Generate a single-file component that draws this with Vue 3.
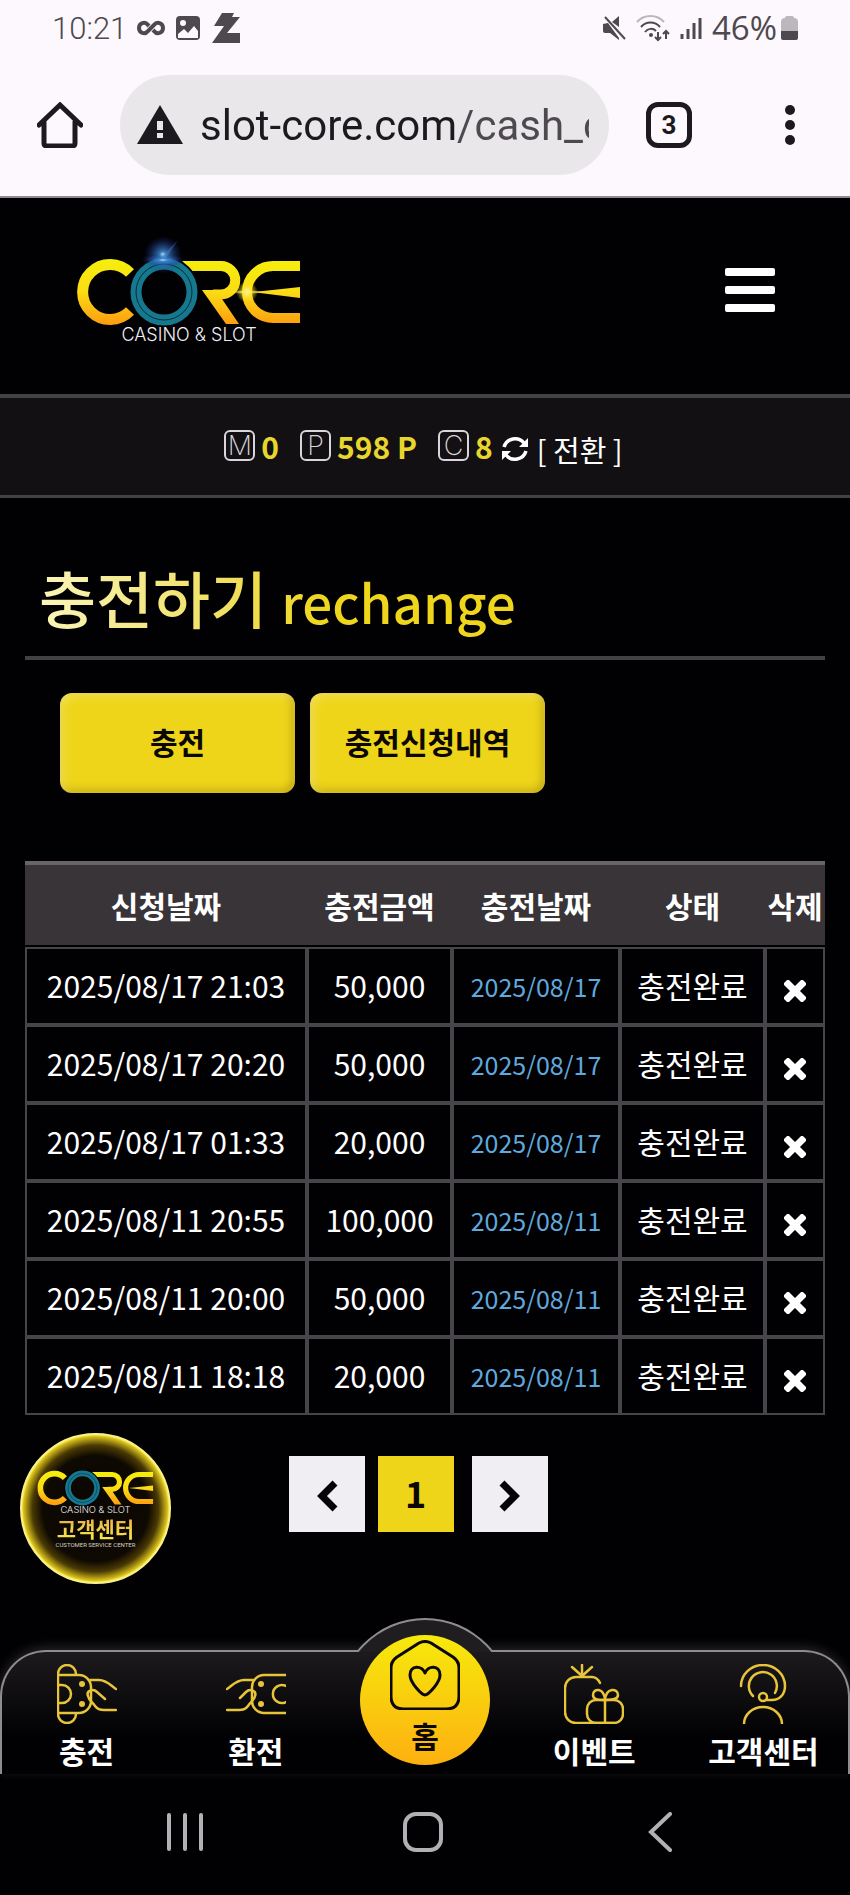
<template>
  <div class="screen">
    <header class="browser">
      <div class="status-bar">
        <div class="status-group">
          <span class="clock">10:21</span>
          <svg class="infinity" width="28" height="18" viewBox="0 0 28 18" aria-hidden="true">
            <path d="M16 11l1 1c3 4 9 2 9-3s-6-7-9-3l-6 6c-3 4-9 2-9-3s6-7 9-3l1 1" />
          </svg>
          <svg width="26" height="26" viewBox="0 0 26 26" aria-hidden="true">
            <rect x="1" y="1" width="24" height="24" rx="4" fill="#4d494f" />
            <circle cx="8" cy="8" r="3" fill="#fcf8fd" />
            <path d="M3 19l6-5 4 4 6-7 4 5v7H3z" fill="#fcf8fd" />
          </svg>
          <svg width="30" height="32" viewBox="0 0 30 32" aria-hidden="true">
            <path d="M11 1h12l-2 4h8L16 21h13v10H1l12-17H3z" fill="#4d494f" />
          </svg>
        </div>
        <div class="status-group right">
          <svg width="24" height="26" viewBox="0 0 24 26" aria-hidden="true">
            <path d="M1 9l5-1 11 15v2l-9-7H3q-2 0-2-2zM10 7l7-6v11z" fill="#4d494f" />
            <path d="M3 2l20 22" stroke="#4d494f" stroke-width="2" />
          </svg>
          <svg class="wifi" width="34" height="28" viewBox="0 0 34 28" aria-hidden="true">
            <path d="M1 8C8 0 21 0 28 8" stroke="#bbb7bd" />
            <path d="M5 13c5-6 14-6 19 0M9 18c3-4 8-4 11-1" />
            <circle cx="15" cy="21" r="2" fill="#4d494f" stroke="none" />
            <path d="M22 18v8m-3-3l3 3 3-3M30 25v-8m-3 3l3-3 3 3" />
          </svg>
          <svg width="22" height="24" viewBox="0 0 22 24" aria-hidden="true">
            <path d="M2 18v5M8 13v10M14 7v16M20 2v21" stroke="#4d494f" stroke-width="3" />
          </svg>
          <span class="battery">
            46%
            <svg width="17" height="24" viewBox="0 0 17 24" aria-hidden="true">
              <path d="M4 2q0-2 2-2h5q2 0 2 2 4 0 4 4v9H0V6q0-4 4-4z" fill="#bbb7bd" />
              <path d="M0 15h17v7q0 2-2 2H2q-2 0-2-2z" fill="#4d494f" />
            </svg>
          </span>
        </div>
      </div>

      <div class="toolbar">
        <button class="icon-button" type="button" aria-label="Home">
          <svg width="46" height="46" viewBox="0 0 46 46" aria-hidden="true">
            <path class="home-line" d="M2 23L23 3l21 20M7 20v21q0 3 3 3h25q3 0 3-3V20" />
          </svg>
        </button>
        <div class="address">
          <svg width="46" height="40" viewBox="0 0 46 40" aria-hidden="true">
            <path d="M23 0l23 39H0z" fill="#1d1a1f" />
            <path d="M20 16h6v9h-6zM20 28h6v5h-6z" fill="#eae7eb" />
          </svg>
          <input v-model="url" class="url" type="text" aria-label="Address">
        </div>
        <button class="icon-button tabs" type="button" aria-label="Tabs">3</button>
        <button class="icon-button more" type="button" aria-label="More">
          <svg width="10" height="42" viewBox="0 0 10 42" aria-hidden="true">
            <circle cx="5" cy="6" r="5" />
            <circle cx="5" cy="21" r="5" />
            <circle cx="5" cy="36" r="5" />
          </svg>
        </button>
      </div>
    </header>

    <div class="site-header">
      <a class="logo" href="#" aria-label="CORE CASINO &amp; SLOT">
        <svg width="224" height="124" viewBox="0 -20 224 124">
          <defs>
            <linearGradient id="gold" gradientUnits="userSpaceOnUse" x1="0" y1="19" x2="0" y2="85">
              <stop offset="0" stop-color="#f5ef0c" />
              <stop offset="0.5" stop-color="#fbdc14" />
              <stop offset="1" stop-color="#fd9c10" />
            </linearGradient>
            <radialGradient id="blue-flare">
              <stop offset="0" stop-color="#c8f6ff" />
              <stop offset="0.2" stop-color="#3f8fd8" stop-opacity="0.8" />
              <stop offset="1" stop-color="#1a2f90" stop-opacity="0" />
            </radialGradient>
            <radialGradient id="gold-flare">
              <stop offset="0" stop-color="#fffbd0" />
              <stop offset="0.4" stop-color="#ffe84a" stop-opacity="0.7" />
              <stop offset="1" stop-color="#ffe000" stop-opacity="0" />
            </radialGradient>
            <symbol id="core-mark" viewBox="0 0 224 104">
              <g fill="none" stroke="url(#gold)" stroke-width="11">
                <path d="M53 33A27.5 27.5 0 1 0 53 71" />
                <path d="M110 26h34a14 14 0 0 1 0 28.5h-8" stroke-width="10" />
                <path d="M223 26h-27a26 26 0 0 0 0 52h27" stroke-width="10" />
              </g>
              <g fill="url(#gold)">
                <path d="M105 21h8v10z" />
                <path d="M125 50h20v9l17 25h-13z" />
                <path d="M176 52l47-5v11z" />
              </g>
              <circle cx="87" cy="52" r="34" fill="none" stroke="#010003" stroke-width="3" />
              <circle cx="87" cy="52" r="28" fill="none" stroke="#15788f" stroke-width="11" />
              <circle cx="87" cy="52" r="28" fill="none" stroke="#062c3a" stroke-width="1" />
              <text x="112" y="101" text-anchor="middle" class="tagline">CASINO &amp; SLOT</text>
            </symbol>
          </defs>
          <use href="#core-mark" width="224" height="104" />
          <circle cx="86" cy="15" r="19" fill="url(#blue-flare)" />
          <ellipse cx="86" cy="20" rx="22" ry="6" fill="url(#blue-flare)" />
          <path d="M84 17L101 0 88 20z" fill="#4a7fd0" opacity="0.4" />
          <circle cx="170" cy="52" r="11" fill="url(#gold-flare)" />
          <ellipse cx="170" cy="52" rx="20" ry="2" fill="url(#gold-flare)" />
        </svg>
      </a>
      <button class="menu-button" type="button" aria-label="메뉴">
        <span></span>
        <span></span>
        <span></span>
      </button>
    </div>

    <div class="balance">
      <div v-for="item in balances" :key="item.mark" class="balance-item">
        <span class="mark">{{ item.mark }}</span>
        <strong>{{ item.value }}</strong>
      </div>
      <button class="convert" type="button">
        <svg width="28" height="28" viewBox="0 0 28 28" aria-hidden="true">
          <path d="M3 12A11.5 11.5 0 0 1 23 8M25 16A11.5 11.5 0 0 1 5 20" fill="none" stroke="#fff" stroke-width="3.5" />
          <path d="M27 3v9h-9zM1 25v-9h9z" fill="#fff" />
        </svg>
        [ 전환 ]
      </button>
    </div>

    <main class="content">
      <h1 class="title">충전하기 <small>rechange</small></h1>

      <div class="actions">
        <button type="button">충전</button>
        <button type="button">충전신청내역</button>
      </div>

      <table class="history">
        <colgroup>
          <col class="col-requested">
          <col class="col-amount">
          <col class="col-charged">
          <col class="col-amount">
          <col class="col-delete">
        </colgroup>
        <thead>
          <tr>
            <th v-for="head in heads" :key="head" scope="col">{{ head }}</th>
          </tr>
        </thead>
        <tbody>
          <tr v-for="row in rows" :key="row.requested">
            <td>{{ row.requested }}</td>
            <td>{{ row.amount }}</td>
            <td class="charged">{{ row.charged }}</td>
            <td>충전완료</td>
            <td class="delete-cell">
              <button type="button" aria-label="삭제">
                <svg width="22" height="22" viewBox="0 0 22 22" aria-hidden="true">
                  <path d="M4 4l14 14M18 4L4 18" stroke="#fff" stroke-width="7" stroke-linecap="square" />
                </svg>
              </button>
            </td>
          </tr>
        </tbody>
      </table>

      <nav class="pagination" aria-label="페이지">
        <a href="#" aria-label="이전">
          <svg width="24" height="34" viewBox="0 0 24 34" aria-hidden="true">
            <path d="M20 4L7 17l13 13" />
          </svg>
        </a>
        <a class="current" href="#" aria-current="page">1</a>
        <a href="#" aria-label="다음">
          <svg width="24" height="34" viewBox="0 0 24 34" aria-hidden="true">
            <path d="M4 4l13 13L4 30" />
          </svg>
        </a>
      </nav>

      <a class="service-badge" href="#">
        <svg width="117" height="54" viewBox="0 0 224 104" aria-hidden="true">
          <use href="#core-mark" width="224" height="104" />
        </svg>
        <strong>고객센터</strong>
        <small>CUSTOMER SERVICE CENTER</small>
      </a>
    </main>

    <nav class="tab-bar" aria-label="메인">
      <div class="hump"></div>
      <a href="#">
        <svg width="60" height="60" viewBox="0 0 60 60" aria-hidden="true">
          <path d="M1 11V50A9 9 0 0 0 19 50M1 50V10A9 9 0 0 1 19 10M1 11H22A12 12 0 0 1 34 23V37A12 12 0 0 1 22 49H1M1 21H5A9 9 0 0 1 5 39H1" />
          <path d="M33 16H42C50 16 54 22 59 25M48 35L40 28C36 24 29 27 31 32C32 37 36 38 38 42C41 46 44 46 47 46H59" />
          <circle class="dot" cx="25" cy="20" r="3" />
          <circle class="dot" cx="25" cy="40" r="3" />
        </svg>
        충전
      </a>
      <a href="#">
        <svg width="60" height="60" viewBox="0 0 60 60" aria-hidden="true">
          <path d="M60 11H38A12 12 0 0 0 26 23V37A12 12 0 0 0 38 49H60M60 22A9 9 0 1 0 60 38" />
          <path d="M27 16H18C10 16 6 22 1 25M14 34L20 28C24 24 31 27 29 32C28 37 24 38 22 42C19 46 16 46 13 46H1" />
          <circle class="dot" cx="35" cy="20" r="3" />
          <circle class="dot" cx="35" cy="40" r="3" />
        </svg>
        환전
      </a>
      <a class="home" href="#">
        <span class="home-disc">
          <svg width="70" height="70" viewBox="0 0 70 70" aria-hidden="true">
            <path d="M29 3L7 17Q1 21 1 28V56Q1 69 14 69H56Q69 69 69 56V28Q69 21 63 17L41 3Q35 0 29 3Z" />
            <path d="M35 55C32 55 20 43 20 35C20 25 32 25 35 33C38 25 50 25 50 35C50 43 38 55 35 55Z" />
          </svg>
          홈
        </span>
      </a>
      <a href="#">
        <svg width="60" height="60" viewBox="0 0 60 60" aria-hidden="true">
          <path d="M36 19C34 15 31 13 28 13H12A11 11 0 0 0 1 24V48A11 11 0 0 0 12 59H50M18 12V1M18 12L8 3M18 12L28 3" />
          <rect x="23" y="36" width="36" height="23" rx="9" />
          <path d="M41 36V59M41 36C35 36 29 36 29 31C29 24 40 23 41 36C42 23 54 24 54 31C54 36 47 36 41 36" />
        </svg>
        이벤트
      </a>
      <a href="#">
        <svg width="60" height="60" viewBox="0 0 60 60" aria-hidden="true">
          <path d="M8 22A22 21 0 0 1 52 22C52 31 46 36 39 36H33M20 32A14 14 0 1 1 42 29" />
          <circle cx="30" cy="33" r="4" />
          <path d="M11 60A19 17 0 0 1 49 60" />
        </svg>
        고객센터
      </a>
    </nav>

    <div class="system-nav">
      <button type="button" aria-label="Recents">
        <svg width="40" height="40" viewBox="0 0 40 40" aria-hidden="true">
          <path d="M4 3v34M20 3v34M36 3v34" />
        </svg>
      </button>
      <button type="button" aria-label="Home screen">
        <svg width="40" height="40" viewBox="0 0 40 40" aria-hidden="true">
          <rect x="2" y="2" width="36" height="36" rx="11" />
        </svg>
      </button>
      <button type="button" aria-label="Back">
        <svg width="40" height="40" viewBox="0 0 40 40" aria-hidden="true">
          <path d="M29 2L10 20l19 18" />
        </svg>
      </button>
    </div>
  </div>
</template>

<script setup>
import { ref } from 'vue'

const url = ref('slot-core.com/cash_c')

const balances = [
  { mark: 'M', value: '0' },
  { mark: 'P', value: '598 P' },
  { mark: 'C', value: '8' }
]

const heads = ['신청날짜', '충전금액', '충전날짜', '상태', '삭제']

const rows = [
  { requested: '2025/08/17 21:03', amount: '50,000', charged: '2025/08/17' },
  { requested: '2025/08/17 20:20', amount: '50,000', charged: '2025/08/17' },
  { requested: '2025/08/17 01:33', amount: '20,000', charged: '2025/08/17' },
  { requested: '2025/08/11 20:55', amount: '100,000', charged: '2025/08/11' },
  { requested: '2025/08/11 20:00', amount: '50,000', charged: '2025/08/11' },
  { requested: '2025/08/11 18:18', amount: '20,000', charged: '2025/08/11' }
]
</script>

<style>
body {
  margin: 0;
  background: #010003;
}
</style>

<style scoped>
* {
  box-sizing: border-box;
}

.screen {
  background: #010003;
  color: #fff;
  font-family: "Noto Sans CJK KR", sans-serif;
  font-size: 30px;
}

button {
  border: 0;
  padding: 0;
  background: none;
  color: inherit;
  font: inherit;
  cursor: pointer;
}

a {
  color: inherit;
  text-decoration: none;
}

svg {
  display: block;
  flex-shrink: 0;
}

/* Browser chrome */
.browser {
  background: #fcf8fd;
  border-bottom: 2px solid #8d8a90;
  font-family: Roboto, sans-serif;
}

.status-bar {
  display: flex;
  align-items: center;
  justify-content: space-between;
  height: 56px;
  padding: 0 52px;
  color: #4d494f;
}

.status-group {
  display: flex;
  align-items: center;
  gap: 10px;
}

.clock {
  font-size: 31px;
  font-weight: 300;
}

.infinity {
  fill: none;
  stroke: #4d494f;
  stroke-width: 4;
}

.wifi {
  fill: none;
  stroke: #4d494f;
  stroke-width: 2;
}

.battery {
  display: flex;
  align-items: center;
  gap: 4px;
  font-family: "Open Sans", sans-serif;
  font-size: 33px;
  line-height: 40px;
}

.toolbar {
  display: flex;
  align-items: center;
  gap: 37px;
  padding: 19px 55px 21px 37px;
  color: #1d1a1f;
}

.icon-button {
  flex-shrink: 0;
}

.home-line {
  fill: none;
  stroke: #1d1a1f;
  stroke-width: 5;
  stroke-linecap: round;
}

.address {
  display: flex;
  flex: 1;
  align-items: center;
  gap: 17px;
  min-width: 0;
  height: 100px;
  padding: 0 20px 0 17px;
  border-radius: 50px;
  background: #eae7eb;
}

.url {
  flex: 1;
  min-width: 0;
  height: 60px;
  border: 0;
  padding: 0;
  outline: 0;
  background: linear-gradient(90deg, #1d1a1f 257px, #4d494f 257px);
  background-clip: text;
  color: transparent;
  font-family: Roboto, sans-serif;
  font-size: 42px;
}

.tabs {
  width: 46px;
  height: 46px;
  border: 5px solid #1d1a1f;
  border-radius: 12px;
  font-size: 26px;
  font-weight: 700;
  line-height: 36px;
}

.more {
  margin-left: 56px;
  fill: #1d1a1f;
}

/* Site header */
.site-header {
  display: flex;
  align-items: center;
  justify-content: space-between;
  height: 196px;
  padding: 0 75px 12px 77px;
}

.logo {
  padding-bottom: 16px;
}

.tagline {
  fill: #f0eef2;
  font-family: Inter, sans-serif;
  font-size: 18px;
  font-weight: 300;
}

.menu-button {
  display: flex;
  flex-direction: column;
  gap: 10px;
}

.menu-button span {
  width: 50px;
  height: 8px;
  border-radius: 2px;
  background: #fff;
}

/* Balance */
.balance {
  display: flex;
  align-items: center;
  justify-content: center;
  height: 104px;
  border-top: 4px solid #434145;
  border-bottom: 3px solid #434145;
  background: #121013;
}

.balance-item {
  display: flex;
  align-items: center;
  gap: 6px;
  margin-right: 21px;
  padding-bottom: 2px;
}

.balance-item:nth-child(3) {
  margin-right: 8px;
}

.mark {
  width: 31px;
  height: 31px;
  border: 2px solid #d9d6db;
  border-radius: 6px;
  color: #d9d6db;
  font-family: Inter, sans-serif;
  font-size: 27px;
  font-weight: 200;
  line-height: 28px;
  text-align: center;
}

.balance strong {
  color: #e8d62c;
  line-height: 40px;
}

.convert {
  display: flex;
  align-items: center;
  gap: 8px;
  padding: 4px 3px 0 0;
  font-size: 29px;
  line-height: 40px;
}

/* Content */
.content {
  position: relative;
  padding: 47px 25px 118px;
}

.title {
  margin: 0;
  padding: 0 14px 7px;
  border-bottom: 4px solid #434144;
  background: linear-gradient(90deg, #fbf6c0 0, #f0e060 200px, #efd51c 300px);
  background-clip: text;
  color: transparent;
  font-size: 62px;
  font-weight: 500;
  line-height: 104px;
}

.title small {
  font-size: 53px;
  line-height: 1;
}

.actions {
  display: flex;
  gap: 15px;
  padding: 33px 35px 68px;
}

.actions button {
  width: 235px;
  height: 100px;
  padding-bottom: 4px;
  border-radius: 12px;
  background: #efd51a;
  box-shadow: inset 3px 3px 8px rgba(255, 255, 255, 0.3), inset -3px -3px 8px rgba(90, 70, 0, 0.3);
  color: #0b0803;
  font-weight: 700;
}

.history {
  width: 100%;
  table-layout: fixed;
  border-spacing: 0;
  text-align: center;
}

.col-requested {
  width: 282px;
}

.col-amount {
  width: 145px;
}

.col-charged {
  width: 168px;
}

.col-delete {
  width: 60px;
}

.history th {
  height: 86px;
  padding: 0;
  border-top: 4px solid #68646a;
  border-bottom: 2px solid #010003;
  background: #383438;
  font-weight: 700;
  white-space: nowrap;
}

.history td {
  height: 78px;
  padding: 0 0 2px;
  border: 2px solid #48454a;
  line-height: 44px;
  white-space: nowrap;
}

.history .charged {
  padding-top: 1px;
  color: #5fa9dd;
  font-size: 25px;
}

.delete-cell button {
  display: inline-block;
  padding-top: 2px;
  vertical-align: middle;
}

.pagination {
  display: flex;
  justify-content: center;
  gap: 13px;
  padding: 41px 14px 0 0;
}

.pagination a {
  display: flex;
  align-items: center;
  justify-content: center;
  width: 76px;
  height: 76px;
  padding-top: 4px;
  background: #f0eef3;
  color: #0b0803;
  fill: none;
  stroke: #050308;
  stroke-width: 7;
  font-size: 36px;
  font-weight: 700;
}

.pagination .current {
  margin-right: 5px;
  padding: 0 0 4px;
  background: #efd51a;
}

/* Floating service button */
.service-badge {
  position: absolute;
  bottom: 66px;
  left: 20px;
  display: flex;
  flex-direction: column;
  align-items: center;
  width: 151px;
  height: 151px;
  padding-top: 26px;
  border: 2px solid #f8f08a;
  border-radius: 50%;
  background: radial-gradient(circle closest-side, #0a0602 0, #0e0902 72%, #4a3a04 86%, #d8c01c 98%, #f6e840 100%);
}

.service-badge strong {
  background: linear-gradient(#e8a84a, #f6ee4a);
  background-clip: text;
  color: transparent;
  font-size: 21px;
  line-height: 26px;
}

.service-badge small {
  color: #d8d2c0;
  font-family: Roboto, sans-serif;
  font-size: 6px;
  line-height: 8px;
}

/* Bottom tabs */
.tab-bar {
  position: relative;
  display: grid;
  grid-template-columns: repeat(5, 1fr);
  height: 124px;
  border: 2px solid #8f8c91;
  border-bottom: 0;
  border-radius: 46px 46px 0 0;
  background: linear-gradient(#1c1a1c, #010003 70%);
  box-shadow: 0 -3px 12px rgba(255, 255, 255, 0.15);
}

.tab-bar a {
  display: flex;
  flex-direction: column;
  align-items: center;
  gap: 4px;
  padding-top: 12px;
  font-weight: 700;
  line-height: 44px;
  white-space: nowrap;
}

.tab-bar svg {
  fill: none;
  stroke: #e8c43a;
  stroke-width: 2.5;
  stroke-linecap: round;
  stroke-linejoin: round;
}

.tab-bar .dot {
  fill: #e8c43a;
  stroke: none;
}

/* Only the cap of the circle shows above the bar */
.hump {
  position: absolute;
  top: -34px;
  left: 50%;
  width: 176px;
  height: 34px;
  margin-left: -88px;
  overflow: hidden;
}

.hump::before {
  content: "";
  display: block;
  height: 176px;
  border: 2px solid #8f8c91;
  border-radius: 50%;
  background: #1f1d1f;
}

.tab-bar .home {
  position: relative;
  padding: 0;
}

.home-disc {
  position: absolute;
  top: -17px;
  display: flex;
  flex-direction: column;
  align-items: center;
  width: 130px;
  height: 130px;
  padding-top: 5px;
  border-radius: 50%;
  background: linear-gradient(#f6ea0c, #fdb010);
  color: #0b0803;
  line-height: 50px;
}

.tab-bar .home-disc svg {
  stroke: #0b0803;
  stroke-width: 3;
}

/* System navigation */
.system-nav {
  display: flex;
  height: 121px;
  padding: 0 70px 5px 66px;
}

.system-nav button {
  display: flex;
  flex: 1;
  align-items: center;
  justify-content: center;
}

.system-nav svg {
  fill: none;
  stroke: #b3b0b5;
  stroke-width: 4;
  stroke-linecap: round;
}
</style>
